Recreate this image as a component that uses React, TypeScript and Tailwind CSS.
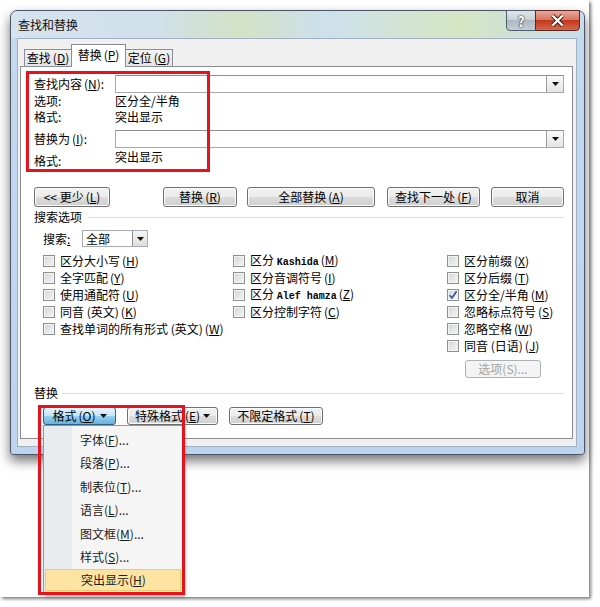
const U = ({ c }: { c: string }) => (
  <span className="underline underline-offset-[1px]">{c}</span>
);

// accelerator key in parentheses, dialog style: small gap before "("
const K = ({ c }: { c: string }) => (
  <span className="ml-[2px]">
    (<U c={c} />)
  </span>
);

function Tri() {
  return (
    <svg width="7" height="4" viewBox="0 0 7 4">
      <path d="M0 0h7L3.5 4z" fill="#111" />
    </svg>
  );
}

function Btn({ className = "", children }: { className?: string; children: React.ReactNode }) {
  return (
    <div
      className={`flex h-full items-center justify-center rounded-[3px] border border-[#707070] bg-[linear-gradient(#f2f2f2_0%,#ebebeb_50%,#dddddd_50%,#cfcfcf_100%)] shadow-[inset_0_0_0_1px_#fbfbfb] leading-none ${className}`}
    >
      {children}
    </div>
  );
}

function Cb({ checked = false }: { checked?: boolean }) {
  return (
    <span className="flex h-[12px] w-[12px] shrink-0 items-center justify-center border border-[#8e8f8f] bg-[linear-gradient(135deg,#d2d5d9,#f5f5f5)] shadow-[inset_0_0_0_1px_#f4f4f4]">
      {checked && (
        <svg width="10" height="10" viewBox="0 0 10 10">
          <path d="M1.5 5.2 L4 8 L8.6 1.2" fill="none" stroke="#2b4fa8" strokeWidth="1.6" />
        </svg>
      )}
    </span>
  );
}

function Check({ children, checked }: { children: React.ReactNode; checked?: boolean }) {
  return (
    <div className="flex h-[17px] items-center gap-[5px] whitespace-nowrap">
      <Cb checked={checked} />
      <span>{children}</span>
    </div>
  );
}

function Combo() {
  return (
    <div className="flex h-[18px] flex-1 justify-end border border-[#a9a9a9] border-t-[#8f8f8f] bg-white">
      <div className="flex w-[17px] items-center justify-center border-l border-[#9a9a9a] bg-[linear-gradient(#fafafa,#e4e4e4)]">
        <Tri />
      </div>
    </div>
  );
}

const mono = "font-['Liberation_Mono',monospace] text-[10px] font-bold";

export default function App() {
  return (
    <div className="h-[607px] w-[600px] bg-white font-['Noto_Sans_CJK_SC','Noto_Sans',sans-serif] text-[12px] text-black">
      <div className="h-[597px] w-[589px] bg-white pl-[10px] pt-[10px] shadow-[2px_2px_3px_rgba(0,0,0,0.5)]">
        {/* window */}
        <div className="relative h-[445px] w-[575px] rounded-t-[7px] rounded-b-[3px] border border-[#4a5668] bg-[linear-gradient(180deg,#cfdfee_0%,#c4d9ee_8%,#bdd4ec_100%)] shadow-[0_6px_12px_rgba(0,0,0,0.55)]">
          {/* title bar */}
          <div className="flex h-[27px] rounded-t-[7px] bg-[linear-gradient(90deg,#d6e3ee_0%,#cfe0ea_25%,#d3e3c6_40%,#cde0ec_55%,#d4e6c2_78%,#c9dcec_100%)]">
            <div className="pl-[7px] pt-[7px] leading-[14px] text-[#111]">查找和替换</div>
            <div className="-mt-px ml-auto mr-[4px] flex h-[21px]">
              <div className="flex w-[30px] items-center justify-center rounded-bl-[4px] border border-[#4f5d6e] bg-[linear-gradient(#dfe5ea_0%,#c8cfd6_50%,#aeb8c2_50%,#c2ccd4_100%)] text-[14px] font-bold leading-none text-white [text-shadow:0_0_2px_#333,0_0_1px_#000]">
                ?
              </div>
              <div className="-ml-px flex w-[45px] items-center justify-center rounded-br-[4px] border border-[#5a2a22] bg-[linear-gradient(#e9a99c_0%,#d7705c_50%,#c2381f_50%,#d6684b_100%)]">
                <svg width="15" height="13" viewBox="0 0 15 13">
                  <path d="M2.5 1.5 L12.5 11.5 M12.5 1.5 L2.5 11.5" stroke="#3a1a14" strokeWidth="4.2" />
                  <path d="M2.5 1.5 L12.5 11.5 M12.5 1.5 L2.5 11.5" stroke="#ffffff" strokeWidth="2.4" />
                </svg>
              </div>
            </div>
          </div>

          {/* client */}
          <div className="ml-[6px] h-[409px] w-[560px] border border-[#9fb1c6] bg-[#f0f0f0]">
            {/* tabs */}
            <div className="relative z-10 ml-[6px] mt-[5px] flex h-[23px] items-end">
              <div className="mb-[1px] flex h-[17px] w-[48px] items-center justify-center border border-b-0 border-[#898c95] bg-[linear-gradient(#f3f3f3,#e4e4e4)] leading-none">
                查找<K c="D" />
              </div>
              <div className="-ml-px flex h-[23px] w-[55px] items-center justify-center border border-b-0 border-[#898c95] bg-white pb-[2px] leading-none">
                替换<K c="P" />
              </div>
              <div className="-ml-px mb-[1px] flex h-[17px] w-[48px] items-center justify-center border border-b-0 border-[#898c95] bg-[linear-gradient(#f3f3f3,#e4e4e4)] leading-none">
                定位<K c="G" />
              </div>
            </div>

            {/* panel */}
            <div className="relative -mt-px ml-[2px] flex h-[373px] w-[553px] flex-col border border-[#898c95] bg-white pl-[13px] pr-[8px] pt-[8px]">
              <div className="absolute left-[5px] top-[4px] h-[101px] w-[184px] border-[3px] border-[#e8121c]" />

              <div className="flex h-[18px] items-center">
                <div className="w-[81px] leading-none">
                  查找内容<K c="N" />:
                </div>
                <Combo />
              </div>
              <div className="flex h-[16px] items-center leading-none">
                <div className="w-[81px]">选项:</div>
                <div>区分全/半角</div>
              </div>
              <div className="flex h-[16px] items-center leading-none">
                <div className="w-[81px]">格式:</div>
                <div>突出显示</div>
              </div>
              <div className="mt-[5px] flex h-[18px] items-center">
                <div className="w-[81px] leading-none">
                  替换为<K c="I" />:
                </div>
                <Combo />
              </div>
              <div className="flex h-[20px]">
                <div className="w-[81px] pt-[6px] leading-[14px]">格式:</div>
                <div className="pt-[2px] leading-[14px]">突出显示</div>
              </div>

              <div className="mt-[19px] flex h-[20px]">
                <Btn className="w-[76px]">
                  &lt;&lt; 更少<K c="L" />
                </Btn>
                <Btn className="ml-[53px] w-[74px]">
                  替换<K c="R" />
                </Btn>
                <Btn className="ml-[10px] w-[128px]">
                  全部替换<K c="A" />
                </Btn>
                <Btn className="ml-[12px] w-[93px]">
                  查找下一处<K c="F" />
                </Btn>
                <Btn className="ml-[11px] w-[73px]">取消</Btn>
              </div>

              <div className="flex h-[20px] items-center">
                <span className="leading-none">搜索选项</span>
                <div className="ml-[6px] h-px flex-1 bg-[#d5dfe5]" />
              </div>

              <div className="mt-[3px] flex h-[17px] items-center pl-[9px]">
                <div className="w-[39px] leading-none">
                  搜索<U c=":" />
                </div>
                <div className="flex h-[17px] w-[66px] border border-[#a5acb5] bg-white">
                  <div className="flex flex-1 items-center pl-[3px] leading-none">全部</div>
                  <div className="flex w-[15px] items-center justify-center border-l border-[#8f8f8f] bg-[linear-gradient(#f6f6f6,#dedede)]">
                    <Tri />
                  </div>
                </div>
              </div>

              <div className="mt-[5px] flex pl-[9px] leading-none">
                <div className="flex w-[190px] flex-col">
                  <Check>
                    区分大小写<K c="H" />
                  </Check>
                  <Check>
                    全字匹配<K c="Y" />
                  </Check>
                  <Check>
                    使用通配符<K c="U" />
                  </Check>
                  <Check>
                    同音 (英文)<K c="K" />
                  </Check>
                  <Check>
                    查找单词的所有形式 (英文)<K c="W" />
                  </Check>
                </div>
                <div className="flex w-[214px] flex-col">
                  <Check>
                    区分 <span className={mono}>Kashida</span>
                    <K c="M" />
                  </Check>
                  <Check>
                    区分音调符号<K c="I" />
                  </Check>
                  <Check>
                    区分 <span className={mono}>Alef hamza</span>
                    <K c="Z" />
                  </Check>
                  <Check>
                    区分控制字符<K c="C" />
                  </Check>
                </div>
                <div className="flex flex-1 flex-col">
                  <Check>
                    区分前缀<K c="X" />
                  </Check>
                  <Check>
                    区分后缀<K c="T" />
                  </Check>
                  <Check checked>
                    区分全/半角<K c="M" />
                  </Check>
                  <Check>
                    忽略标点符号<K c="S" />
                  </Check>
                  <Check>
                    忽略空格<K c="W" />
                  </Check>
                  <Check>
                    同音 (日语)<K c="J" />
                  </Check>
                  <div className="ml-[18px] mt-[6px] flex h-[18px] w-[76px] items-center justify-center rounded-[3px] border border-[#adb2b5] bg-[#f4f4f4] text-[#a3a3a3]">
                    选项(S)...
                  </div>
                </div>
              </div>

              <div className="mt-[6px] flex h-[18px] items-center">
                <span className="leading-none">替换</span>
                <div className="ml-[4px] h-px flex-1 bg-[#d5dfe5]" />
              </div>

              <div className="mt-[5px] flex h-[18px] gap-[11px] pl-[9px]">
                <div className="relative w-[73px]">
                  <div className="flex h-full items-center justify-center gap-[4px] rounded-[3px] border border-[#2c628b] bg-[linear-gradient(#e5f4fc_0%,#c4e5f6_50%,#98d1ef_50%,#68b3db_100%)] leading-none">
                    <span>
                      格式<K c="O" />
                    </span>
                    <Tri />
                  </div>
                  {/* menu */}
                  <div className="absolute left-0 top-[18px] z-20 h-[170px] w-[140px] border border-[#979797] bg-[linear-gradient(90deg,#e9ecee_0px,#e9ecee_28px,#f5f5f5_28px)] pt-[2px] text-[#1b1b1b] shadow-[2px_2px_3px_rgba(0,0,0,0.3)]">
                    {[
                      ["字体", "F"],
                      ["段落", "P"],
                      ["制表位", "T"],
                      ["语言", "L"],
                      ["图文框", "M"],
                      ["样式", "S"],
                    ].map(([t, k]) => (
                      <div key={t} className="flex h-[23.5px] items-center pl-[36px] leading-none">
                        {t}(<U c={k} />)...
                      </div>
                    ))}
                    <div className="mx-px flex h-[22px] items-center border border-[#f2ca6a] bg-[#fde4a2] pl-[35px] leading-none">
                      突出显示(<U c="H" />)
                    </div>
                  </div>
                  <div className="absolute left-[-5px] top-[-2px] z-30 h-[190px] w-[147px] border-[3px] border-[#e8121c]" />
                </div>
                <Btn className="w-[91px] gap-[3px]">
                  <span>
                    特殊格式<K c="E" />
                  </span>
                  <Tri />
                </Btn>
                <Btn className="w-[94px]">
                  不限定格式<K c="T" />
                </Btn>
              </div>
            </div>
          </div>
        </div>
      </div>
    </div>
  );
}
